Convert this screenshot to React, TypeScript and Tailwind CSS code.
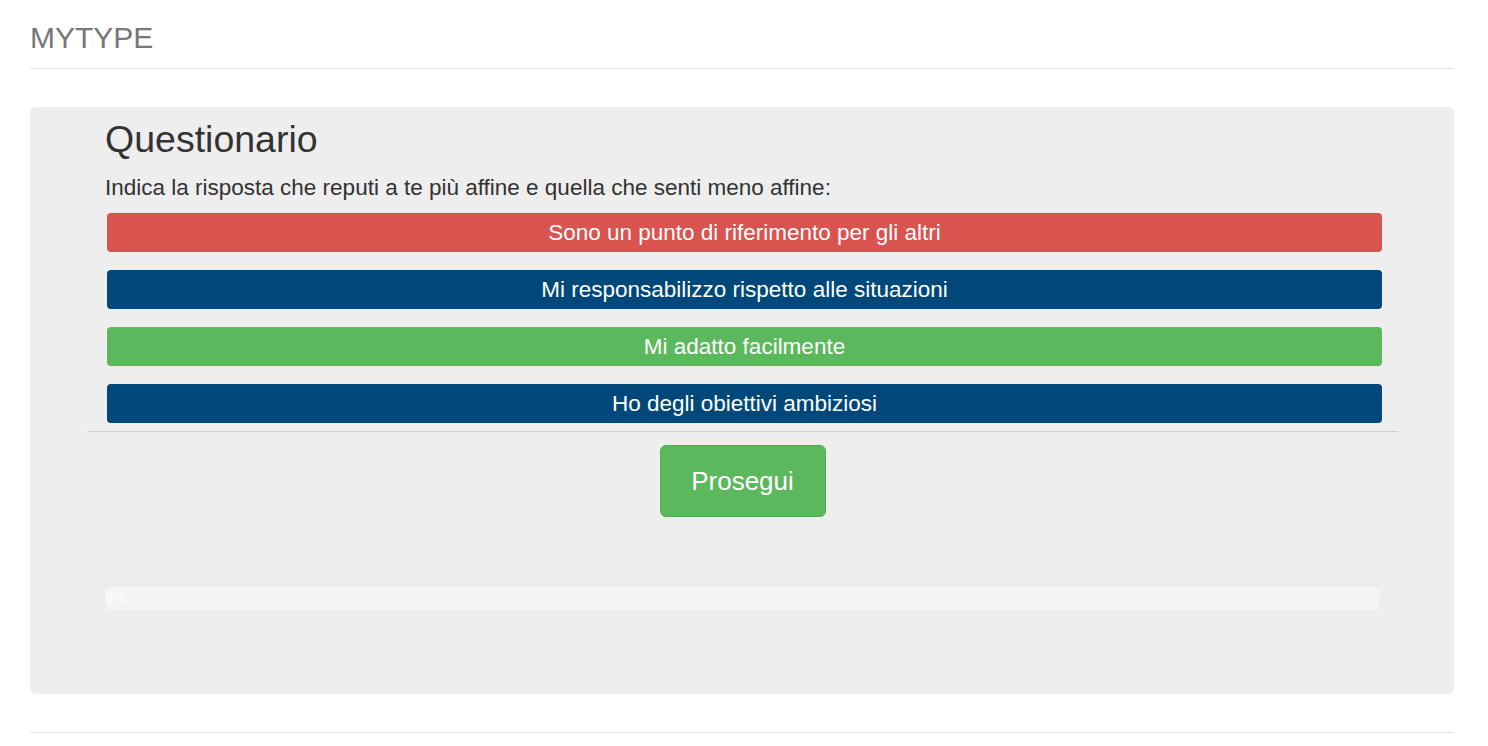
const answers = [
  { label: "Sono un punto di riferimento per gli altri", color: "bg-[#d9534f]" },
  { label: "Mi responsabilizzo rispetto alle situazioni", color: "bg-[#00487a]" },
  { label: "Mi adatto facilmente", color: "bg-[#5cb85c]" },
  { label: "Ho degli obiettivi ambiziosi", color: "bg-[#00487a]" },
];

const App = () => {
  const progress = 0;

  return (
    <div className="min-h-[746px] bg-white pl-[30px] pr-[34px] font-['Liberation_Sans',Arial,sans-serif] text-[#333]">
      <header className="border-b border-[#e5e5e5] pt-[21px] pb-[14px]">
        <h3 className="text-[30px] leading-[33px] text-[#777]">MYTYPE</h3>
      </header>

      <main className="mt-[38px] h-[587px] rounded-[6px] bg-[#eeeeee] pl-[57px] pr-[56px] pt-[12px]">
        <div className="pl-[18px] pr-[18px]">
          <h2 className="text-[37.5px] leading-[41px]">Questionario</h2>
          <p className="mt-[15px] text-[22.5px] leading-[26px]">
            Indica la risposta che reputi a te più affine e quella che senti meno affine:
          </p>
        </div>

        <div className="mt-[12px] ml-[20px] mr-[16px] flex flex-col gap-[18px]">
          {answers.map((a) => (
            <button
              key={a.label}
              className={`${a.color} flex h-[39px] w-full items-center justify-center rounded-[4px] text-[22.5px] leading-[26px] text-white`}
            >
              {a.label}
            </button>
          ))}
        </div>

        <hr className="mt-[8px] border-0 border-t border-[#cfcfcf]" />

        <div className="mt-[13px] flex justify-center">
          <button className="h-[72px] w-[166px] rounded-[6px] border border-[#4cae4c] bg-[#5cb85c] text-[26px] text-white">
            Prosegui
          </button>
        </div>

        <div className="ml-[18px] mr-[18px] mt-[68px] h-[25px] overflow-hidden rounded-[4px] bg-[#f4f4f4] shadow-[inset_0_1px_2px_rgba(0,0,0,0.08)]">
          <div
            className="flex h-full items-center whitespace-nowrap text-[14px] leading-[20px] text-white"
            style={{ width: `${progress}%` }}
          >
            {progress}%
          </div>
        </div>
      </main>

      <hr className="mt-[38px] border-0 border-t border-[#e5e5e5]" />
    </div>
  );
};

export default App;
